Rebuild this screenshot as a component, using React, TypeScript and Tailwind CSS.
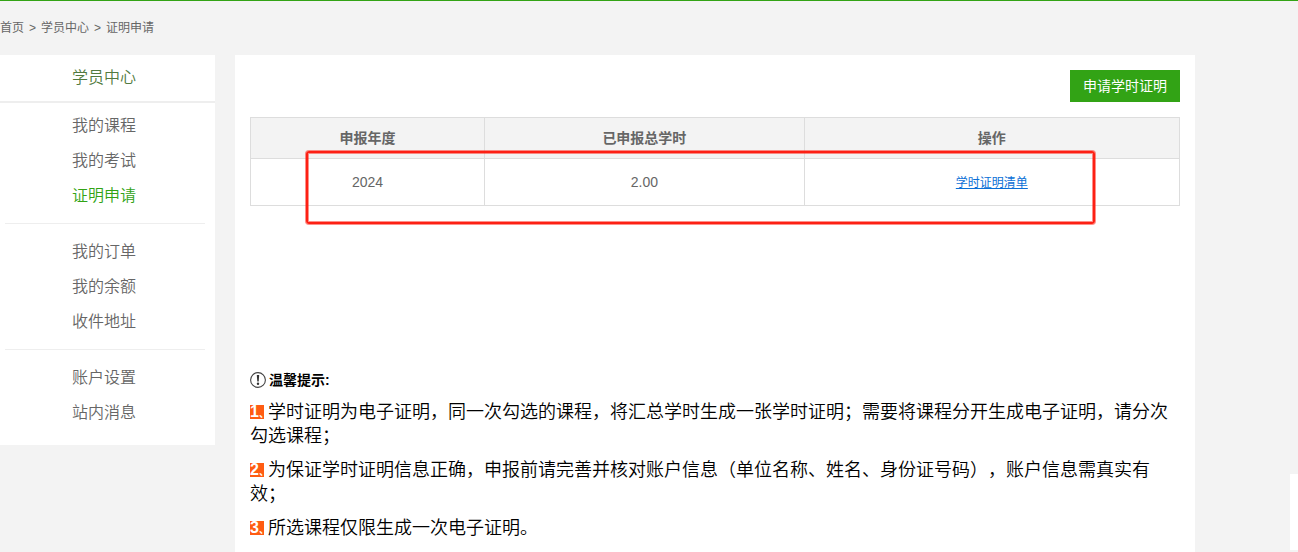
import React from "react";

const menuGroups = [
  ["我的课程", "我的考试", "证明申请"],
  ["我的订单", "我的余额", "收件地址"],
  ["账户设置", "站内消息"],
];

const notes = [
  "学时证明为电子证明，同一次勾选的课程，将汇总学时生成一张学时证明；需要将课程分开生成电子证明，请分次勾选课程；",
  "为保证学时证明信息正确，申报前请完善并核对账户信息（单位名称、姓名、身份证号码），账户信息需真实有效；",
  "所选课程仅限生成一次电子证明。",
];

function Breadcrumb() {
  return (
    <nav aria-label="面包屑" className="flex h-[54px] items-center gap-[5px] text-xs">
      <a href="#home">首页</a>
      <span>&gt;</span>
      <a href="#center">学员中心</a>
      <span>&gt;</span>
      <a href="#certificate">证明申请</a>
    </nav>
  );
}

function Sidebar() {
  return (
    <aside className="w-[215px] shrink-0 bg-white pb-[15px] text-base font-[350]">
      <h2 className="border-b-2 border-[#eeeeee] pt-[11px] pr-[7px] pb-[11px] text-center leading-6 text-[#527a40]">
        学员中心
      </h2>
      <div className="flex flex-col pt-[5px]">
        {menuGroups.map((group, i) => (
          <ul
            key={i}
            className={
              i < menuGroups.length - 1
                ? "mr-2.5 ml-[5px] mb-2.5 border-b border-[#eeeeee] pb-2.5"
                : "mr-2.5 ml-[5px]"
            }
          >
            {group.map((item) => (
              <li key={item} className="pr-0.5 text-center leading-[35px]">
                <a href="#menu" className={item === "证明申请" ? "text-[#32a315]" : undefined}>
                  {item}
                </a>
              </li>
            ))}
          </ul>
        ))}
      </div>
    </aside>
  );
}

function RecordTable() {
  return (
    <div className="relative mt-[15px]">
      <table className="w-full table-fixed border-collapse text-sm">
        <colgroup>
          <col className="w-[25.2%]" />
          <col className="w-[34.4%]" />
          <col />
        </colgroup>
        <thead>
          <tr className="h-[41px] bg-[#f3f3f3]">
            <th className="border border-[#dddddd] font-bold">申报年度</th>
            <th className="border border-[#dddddd] font-bold">已申报总学时</th>
            <th className="border border-[#dddddd] font-bold">操作</th>
          </tr>
        </thead>
        <tbody>
          <tr className="h-[47px] text-center">
            <td className="border border-[#dddddd]">2024</td>
            <td className="border border-[#dddddd]">2.00</td>
            <td className="border border-[#dddddd]">
              <a href="#list" className="text-xs text-[#0a6fd6] underline">
                学时证明清单
              </a>
            </td>
          </tr>
        </tbody>
      </table>
      <div className="pointer-events-none absolute top-[34px] right-[85px] -bottom-[18px] left-14 rounded-[3px] border-2 border-[#fd2014] shadow-[0_0_0_1px_#fd201480,inset_0_0_0_1px_#fd201480]" />
    </div>
  );
}

function Tips() {
  return (
    <section className="mt-[164px] text-black">
      <h3 className="flex items-center gap-[3px] text-sm leading-5 font-bold">
        <svg viewBox="0 0 16 16" className="size-4" aria-hidden="true">
          <circle cx="8" cy="8" r="7.4" fill="none" stroke="#444" strokeWidth="1.1" />
          <path d="M6.8 3h2.4l-.5 6.6H7.3z" fill="#333" />
          <circle cx="8" cy="11.8" r="1.2" fill="#333" />
        </svg>
        温馨提示:
      </h3>
      <div className="mt-2.5 flex flex-col gap-2.5 text-lg leading-6 font-[350] [text-spacing-trim:space-all]">
        {notes.map((note, i) => (
          <p key={i}>
            <span className="mr-1 inline-flex h-3.5 w-3.5 items-baseline bg-[#ff5c12] align-[1px] text-base leading-[14px] font-bold whitespace-nowrap text-white">
              <span>{i + 1}</span>
              <span className="text-[10px] [font-feature-settings:'halt']">、</span>
            </span>
            {note}
          </p>
        ))}
      </div>
    </section>
  );
}

export default function App() {
  return (
    <div className="min-h-screen border-t border-[#32a315] bg-[#f3f3f3] font-['Liberation_Sans','Noto_Sans_CJK_SC',sans-serif] text-[#666666]">
      <Breadcrumb />
      <div className="flex items-start gap-5 pr-[103px]">
        <Sidebar />
        <main className="min-w-0 flex-1 bg-white p-[15px]">
          <div className="flex justify-end">
            <button type="button" className="h-8 bg-[#32a315] px-[13px] text-sm text-white">
              申请学时证明
            </button>
          </div>
          <RecordTable />
          <Tips />
        </main>
      </div>
      <div className="fixed right-0 bottom-0.5 h-[76px] w-2 bg-white" />
    </div>
  );
}
